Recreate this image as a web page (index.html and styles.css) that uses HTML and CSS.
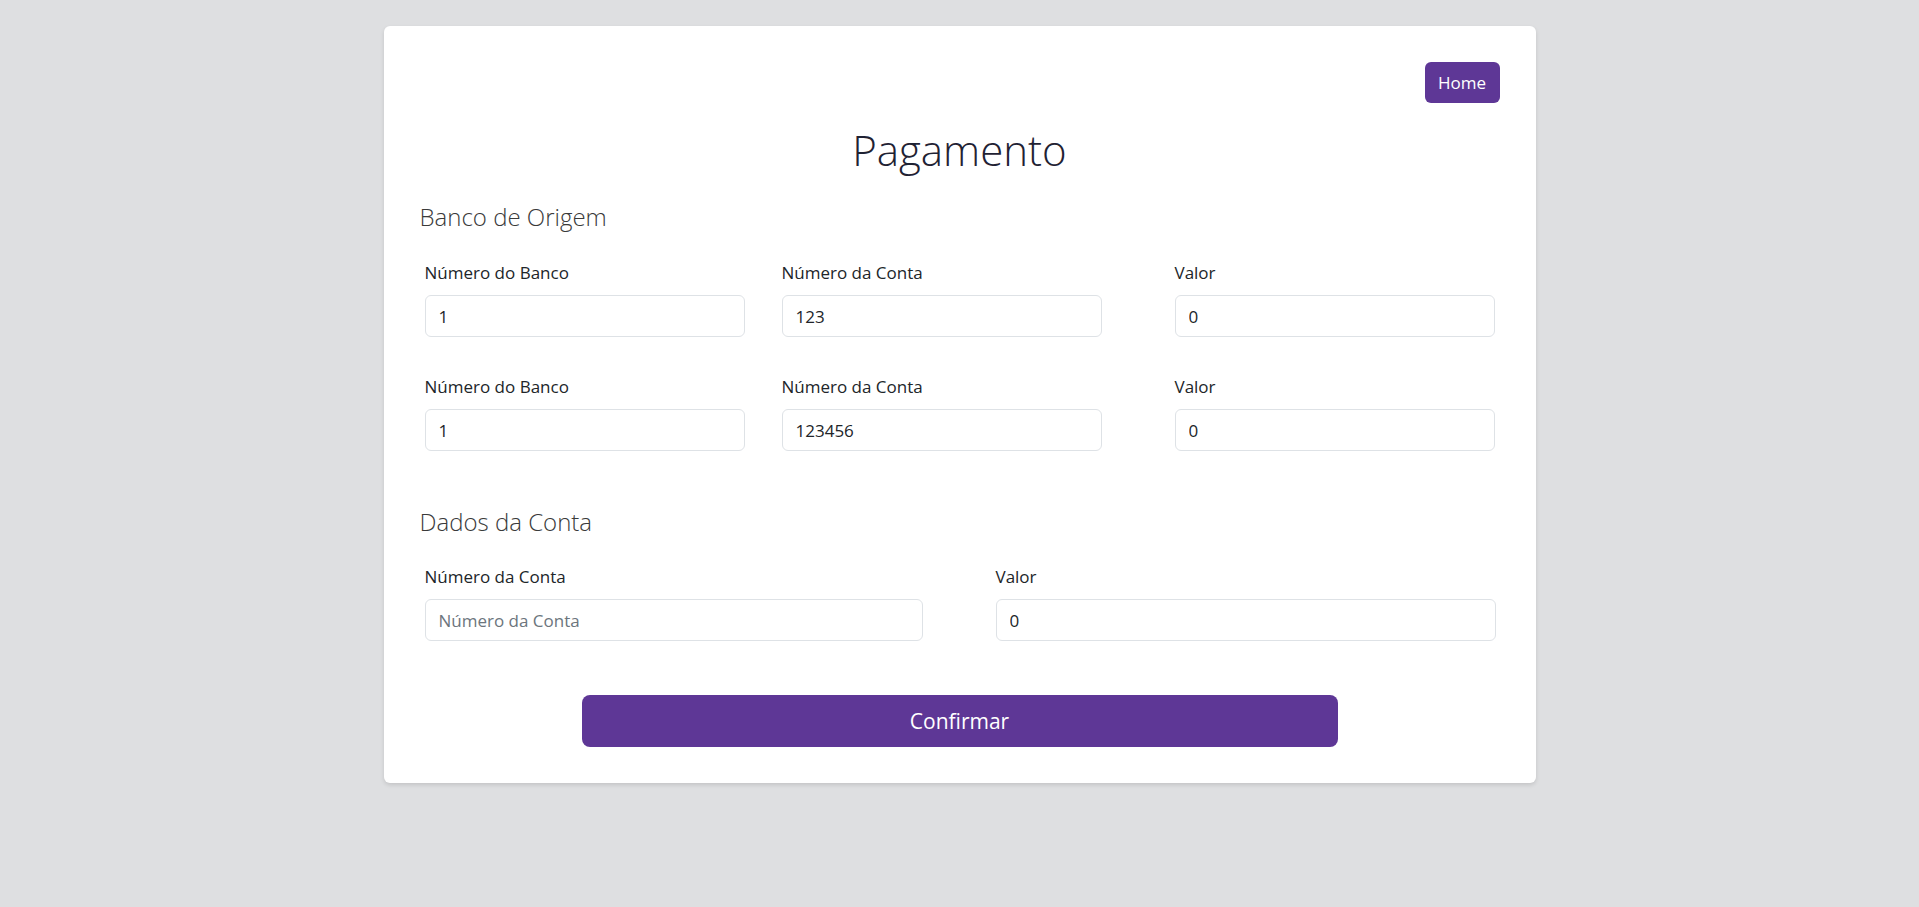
FILE: index.html
```html
<!DOCTYPE html>
<html lang="pt-BR">
<head>
<meta charset="utf-8">
<title>Pagamento</title>
<link rel="stylesheet" href="styles.css">
</head>
<body>
<main class="card">
  <div class="topbar">
    <a class="btn-home" href="#">Home</a>
  </div>
  <h1 class="title">Pagamento</h1>

  <h2 class="section-title">Banco de Origem</h2>
  <div class="row row-3">
    <div class="field">
      <label class="label">Número do Banco</label>
      <input class="input" type="text" value="1">
    </div>
    <div class="field">
      <label class="label">Número da Conta</label>
      <input class="input" type="text" value="123">
    </div>
    <div class="field">
      <label class="label">Valor</label>
      <input class="input" type="text" value="0">
    </div>
  </div>
  <div class="row row-3 row-next">
    <div class="field">
      <label class="label">Número do Banco</label>
      <input class="input" type="text" value="1">
    </div>
    <div class="field">
      <label class="label">Número da Conta</label>
      <input class="input" type="text" value="123456">
    </div>
    <div class="field">
      <label class="label">Valor</label>
      <input class="input" type="text" value="0">
    </div>
  </div>

  <h2 class="section-title section-second">Dados da Conta</h2>
  <div class="row row-2">
    <div class="field">
      <label class="label">Número da Conta</label>
      <input class="input" type="text" placeholder="Número da Conta">
    </div>
    <div class="field">
      <label class="label">Valor</label>
      <input class="input" type="text" value="0">
    </div>
  </div>

  <div class="actions">
    <button class="btn-confirm" type="button">Confirmar</button>
  </div>
</main>
</body>
</html>
```

FILE: styles.css
```css
* { box-sizing: border-box; }

html, body {
  margin: 0;
  padding: 0;
}

body {
  background: #dedfe1;
  font-family: "Open Sans", "Noto Sans", "Liberation Sans", sans-serif;
  color: #212529;
  padding-top: 26px;
  min-height: 907px;
}

.card {
  width: 1152px;
  margin: 0 auto;
  background: #ffffff;
  border-radius: 6px;
  padding: 36px;
  box-shadow: 0 2px 4px rgba(0, 0, 0, 0.12);
  display: flex;
  flex-direction: column;
}

.topbar {
  display: flex;
  justify-content: flex-end;
}

.btn-home {
  display: flex;
  align-items: center;
  justify-content: center;
  width: 75px;
  height: 41px;
  background: #5e3796;
  color: #ffffff;
  border-radius: 6px;
  font-size: 17px;
  text-decoration: none;
}

.title {
  margin: 22px 0 0 0;
  font-size: 42px;
  line-height: 50px;
  font-weight: 300;
  text-align: center;
  color: #1f2233;
}

.section-title {
  margin: 27px 0 0 0;
  font-size: 24px;
  line-height: 30px;
  font-weight: 300;
  color: #3a3a3a;
}

.section-second {
  margin-top: 56px;
}

.row {
  display: flex;
  margin: 29px 4px 0 5px;
}

.row-3 .field {
  width: 320px;
}

.row-3 .field + .field {
  margin-left: 37px;
}

.row-3 .field:last-child {
  margin-left: 73px;
}

.row-next {
  margin-top: 38px;
}

.row-2 {
  margin-top: 28px;
}

.row-2 .field:first-child {
  width: 498px;
}

.row-2 .field:last-child {
  width: 500px;
  margin-left: 73px;
}

.field {
  display: flex;
  flex-direction: column;
  gap: 10px;
}

.label {
  font-size: 17px;
  line-height: 24px;
  color: #212529;
}

.input {
  width: 100%;
  height: 42px;
  border: 1px solid #dee2e6;
  border-radius: 6px;
  padding: 0 13px;
  font-family: inherit;
  font-size: 17px;
  color: #212529;
  background: #ffffff;
  outline: none;
}

.input::placeholder {
  color: #6c757d;
}

.actions {
  display: flex;
  justify-content: center;
  margin-top: 54px;
}

.btn-confirm {
  width: 756px;
  height: 52px;
  border: none;
  border-radius: 8px;
  background: #5e3796;
  color: #ffffff;
  font-family: inherit;
  font-size: 21px;
  cursor: pointer;
}
```
